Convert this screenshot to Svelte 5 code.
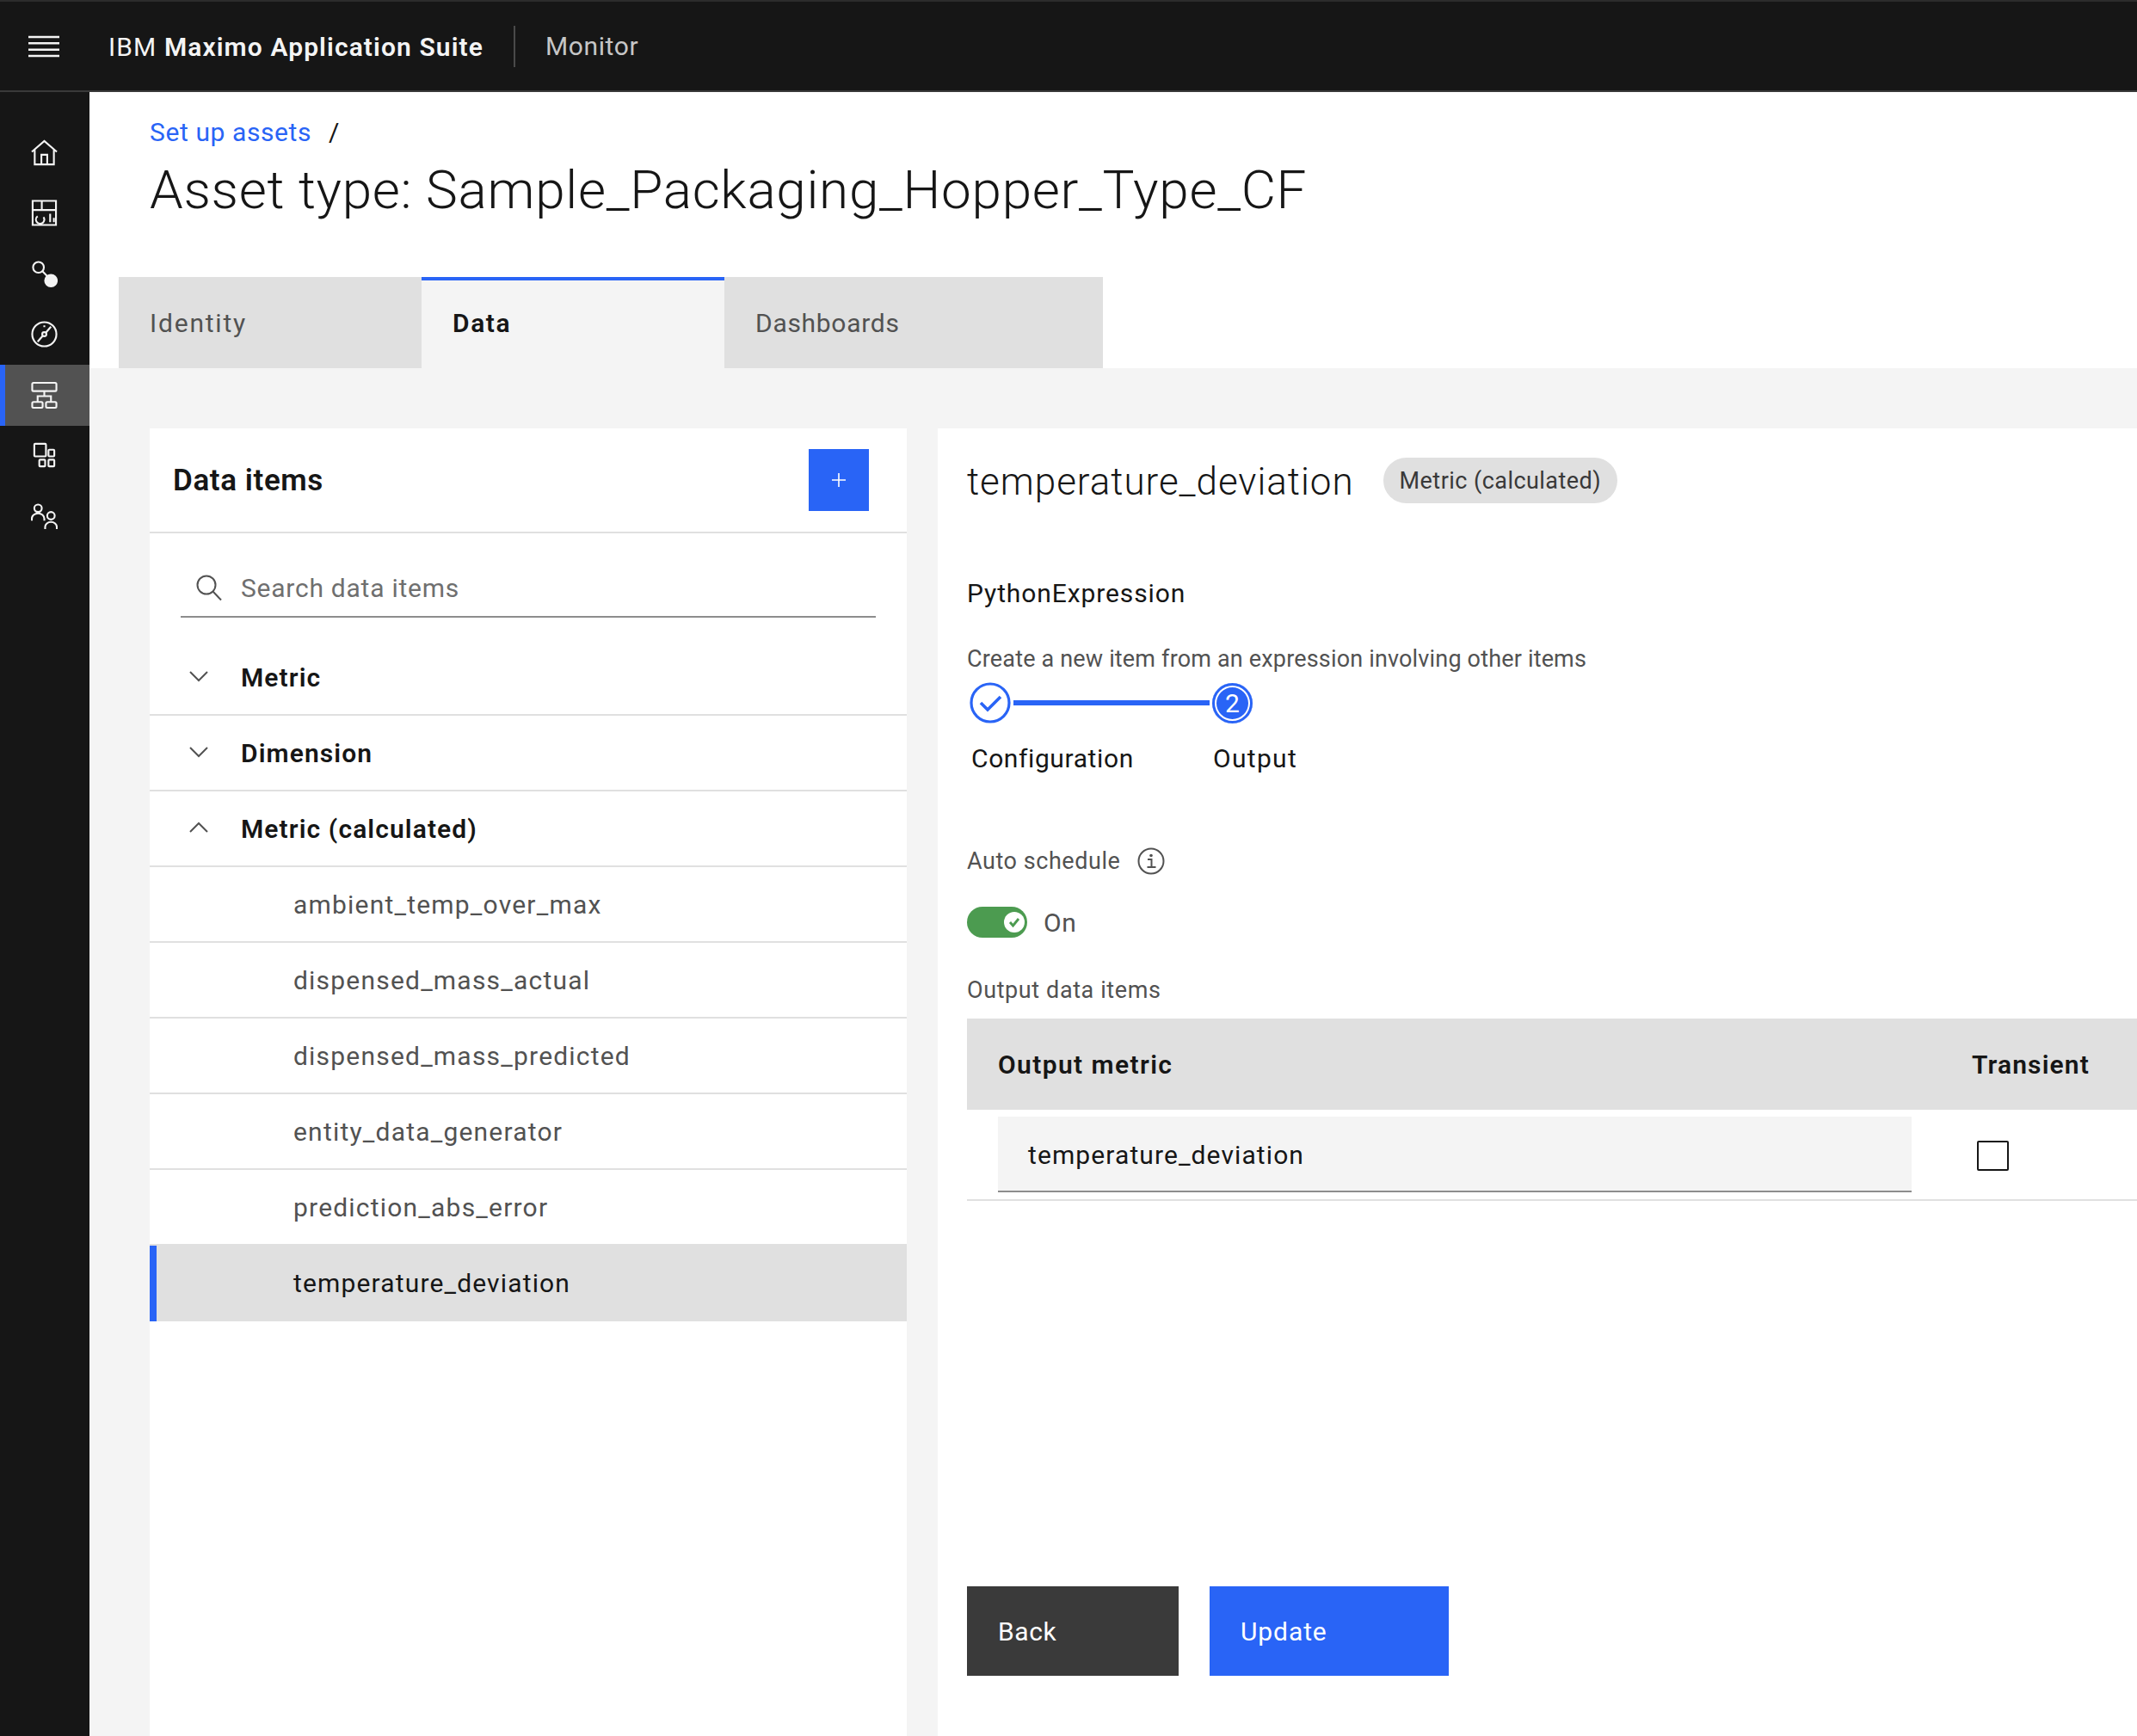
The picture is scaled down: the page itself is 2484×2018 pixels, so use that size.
<script>
  const items = [
    "ambient_temp_over_max",
    "dispensed_mass_actual",
    "dispensed_mass_predicted",
    "entity_data_generator",
    "prediction_abs_error",
    "temperature_deviation"
  ];
  const selected = "temperature_deviation";
</script>

<div class="page">
  <header class="topbar">
    <button class="menu" aria-label="Menu">
      <svg width="36" height="26" viewBox="0 0 36 26"><path d="M0 2h36M0 9.300h36M0 16.700h36M0 24h36" stroke="#f4f4f4" stroke-width="2.400" fill="none" /></svg>
    </button>
    <div class="brand"><span>IBM</span> <strong>Maximo Application Suite</strong></div>
    <div class="app-name">Monitor</div>
  </header>

  <div class="body">
    <nav class="sidenav">
      <div class="nav-item">
        <svg viewBox="0 0 32 32"><path d="M1 15 16 2l15 13M4.500 12.500V30h23V12.500M12.500 30V18.500h7V30" /></svg>
      </div>
      <div class="nav-item">
        <svg viewBox="0 0 32 32"><path d="M2 1.500h28v29H2zM2 12.500h28M13 1.500v11M23 17v10M27.500 22v5" /><path d="M15 21a5 5 0 1 1-7-1" /></svg>
      </div>
      <div class="nav-item">
        <svg viewBox="0 0 32 32"><circle cx="9" cy="8" r="6.500" /><path d="m14 13 6 6" /><circle cx="24" cy="24" r="7" class="solid" /></svg>
      </div>
      <div class="nav-item">
        <svg viewBox="0 0 32 32"><circle cx="16" cy="16" r="14.500" /><circle cx="16" cy="16" r="2.500" /><path d="m18 14 6-7M14 18l-6 7M16 5.500v2" /></svg>
      </div>
      <div class="nav-item active">
        <svg viewBox="0 0 32 32"><rect x="1.500" y="1" width="29" height="10" rx="1.500" /><path d="M16 11v6M8 24v-7h16v7" /><rect x="1.500" y="24" width="12.500" height="7" rx="1.500" /><rect x="18" y="24" width="12.500" height="7" rx="1.500" /></svg>
      </div>
      <div class="nav-item">
        <svg viewBox="0 0 32 32"><rect x="4" y="2" width="14" height="15" rx="1" /><rect x="21" y="9" width="7" height="8" rx="1" /><rect x="10" y="21" width="7" height="8" rx="1" /><rect x="21" y="21" width="7" height="8" rx="1" /></svg>
      </div>
      <div class="nav-item">
        <svg viewBox="0 0 32 32"><circle cx="8.500" cy="6" r="4.500" /><path d="M1 21v-2.500a7 6 0 0 1 15 0V21" /><circle cx="24" cy="15" r="4.500" /><path d="M17 31v-2.500a7 6 0 0 1 14 0V31" /></svg>
      </div>
    </nav>

    <main class="main">
      <section class="head">
        <div class="crumb"><a href="#assets">Set up assets</a><span>/</span></div>
        <h1>Asset type: Sample_Packaging_Hopper_Type_CF</h1>
        <div class="tabs">
          <div class="tab">Identity</div>
          <div class="tab current">Data</div>
          <div class="tab wide">Dashboards</div>
        </div>
      </section>

      <section class="content">
        <aside class="panel list-panel">
          <div class="panel-head">
            <h2>Data items</h2>
            <button class="add" aria-label="Add">
              <svg width="18" height="18" viewBox="0 0 18 18"><path d="M9 1v16M1 9h16" stroke="#fff" stroke-width="1.600" /></svg>
            </button>
          </div>
          <div class="search">
            <svg width="32" height="32" viewBox="0 0 32 32"><circle cx="13" cy="13" r="10.500" /><path d="m20.500 20.500 9.500 10" /></svg>
            <span>Search data items</span>
          </div>
          <div class="group first">
            <svg class="chev" width="24" height="14" viewBox="0 0 24 14"><path d="m2 2 10 10L22 2" /></svg>
            Metric
          </div>
          <div class="group">
            <svg class="chev" width="24" height="14" viewBox="0 0 24 14"><path d="m2 2 10 10L22 2" /></svg>
            Dimension
          </div>
          <div class="group">
            <svg class="chev" width="24" height="14" viewBox="0 0 24 14"><path d="m2 12 10-10 10 10" /></svg>
            Metric (calculated)
          </div>
          {#each items as item}
            <div class="item" class:selected={item === selected}>{item}</div>
          {/each}
        </aside>

        <div class="panel detail">
          <div class="detail-title">
            <h2>temperature_deviation</h2>
            <span class="tag">Metric (calculated)</span>
          </div>
          <div class="fn-name">PythonExpression</div>
          <div class="fn-desc">Create a new item from an expression involving other items</div>

          <div class="steps">
            <svg class="step-icon" width="48" height="48" viewBox="0 0 48 48">
              <circle cx="24" cy="24" r="22" fill="#fff" stroke="#2964f6" stroke-width="3.200" />
              <path d="m13 24 8 8 15-15" fill="none" stroke="#2964f6" stroke-width="3.600" />
            </svg>
            <div class="step-line"></div>
            <div class="step-now">2</div>
          </div>
          <div class="step-labels">
            <span class="cfg">Configuration</span>
            <span>Output</span>
          </div>

          <div class="auto">
            <span>Auto schedule</span>
            <svg width="32" height="32" viewBox="0 0 32 32"><circle cx="16" cy="16" r="14.500" fill="none" stroke="#525252" stroke-width="2" /><path d="M12 14h4.500v9M11.500 23h10" fill="none" stroke="#525252" stroke-width="2" /><circle cx="16" cy="9.500" r="1.800" fill="#525252" /></svg>
          </div>
          <div class="toggle-row">
            <div class="toggle">
              <div class="knob">
                <svg width="14" height="14" viewBox="0 0 14 14"><path d="m2 7 3.500 4L12 3" fill="none" stroke="#4c9b50" stroke-width="2.800" /></svg>
              </div>
            </div>
            <span>On</span>
          </div>

          <div class="table-label">Output data items</div>
          <div class="table-head">
            <span class="metric-col">Output metric</span>
            <span class="transient">Transient</span>
          </div>
          <div class="table-row">
            <div class="input">temperature_deviation</div>
            <div class="checkbox"></div>
          </div>

          <div class="actions">
            <button class="btn back">Back</button>
            <button class="btn primary">Update</button>
          </div>
        </div>
      </section>
    </main>
  </div>
</div>

<style>
  :global(body) {
    margin: 0;
    background: #fff;
    overflow: hidden;
  }

  .page {
    width: 2484px;
    height: 2018px;
    overflow: hidden;
    display: flex;
    flex-direction: column;
    font-family: "Roboto", "Liberation Sans", sans-serif;
    color: #161616;
    font-size: 30px;
    letter-spacing: 0.6px;
  }

  h1,
  h2 {
    margin: 0;
    font-weight: 400;
  }

  button {
    border: 0;
    padding: 0;
    font: inherit;
    letter-spacing: inherit;
  }

  .topbar {
    box-sizing: border-box;
    height: 107px;
    flex-shrink: 0;
    display: flex;
    align-items: center;
    background: #161616;
    border-top: 2px solid #2c2c2c;
    border-bottom: 2px solid #3a3a3a;
    color: #f4f4f4;
  }

  .menu {
    width: 101px;
    display: flex;
    justify-content: center;
    background: none;
  }

  .brand {
    margin-left: 25px;
    padding-right: 35px;
    height: 48px;
    line-height: 50px;
    border-right: 2px solid #4a4a4a;
    letter-spacing: 1.100px;
    white-space: nowrap;
  }

  .brand strong {
    font-weight: 600;
  }

  .app-name {
    margin-left: 35px;
    color: #c6c6c6;
  }

  .body {
    flex: 1;
    display: flex;
    min-height: 0;
  }

  .sidenav {
    width: 104px;
    flex-shrink: 0;
    background: #161616;
    padding-top: 35px;
  }

  .nav-item {
    height: 70.500px;
    display: flex;
    align-items: center;
    justify-content: center;
    box-sizing: border-box;
    padding-right: 2px;
  }

  .nav-item svg {
    width: 31px;
    height: 33px;
    fill: none;
    stroke: #f4f4f4;
    stroke-width: 2.200;
  }

  .nav-item .solid {
    fill: #f4f4f4;
  }

  .nav-item.active {
    background: #525252;
    border-left: 6px solid #2964f6;
    padding-right: 8px;
  }

  .main {
    flex: 1;
    min-width: 0;
    display: flex;
    flex-direction: column;
  }

  .head {
    height: 321px;
    flex-shrink: 0;
    padding-left: 34px;
    box-sizing: border-box;
    display: flex;
    flex-direction: column;
  }

  .crumb {
    margin: 23px 0 0 36px;
    display: flex;
    gap: 20px;
    line-height: 48px;
  }

  .crumb a {
    color: #2964f6;
    text-decoration: none;
  }

  h1 {
    margin: 4px 0 0 36px;
    font-size: 62px;
    line-height: 78px;
    font-weight: 300;
    white-space: nowrap;
    letter-spacing: 0.7px;
  }

  .tabs {
    margin-top: auto;
    display: flex;
  }

  .tab {
    box-sizing: border-box;
    width: 352px;
    height: 106px;
    padding: 0 36px;
    display: flex;
    align-items: center;
    background: #e0e0e0;
    color: #525252;
    letter-spacing: 0.700px;
  }

  .tab:first-child {
    letter-spacing: 1.800px;
  }

  .tab.current {
    background: #f4f4f4;
    border-top: 4px solid #2964f6;
    color: #161616;
    font-weight: 600;
    padding-bottom: 4px;
    letter-spacing: 1.600px;
  }

  .tab.wide {
    width: 440px;
  }

  .content {
    flex: 1;
    min-height: 0;
    display: flex;
    gap: 36px;
    padding: 70px 0 0 70px;
    background: #f4f4f4;
  }

  .panel {
    background: #fff;
    box-sizing: border-box;
  }

  .list-panel {
    width: 880px;
    flex-shrink: 0;
  }

  .panel-head {
    box-sizing: border-box;
    height: 122px;
    display: flex;
    align-items: center;
    justify-content: space-between;
    padding: 0 44px 0 27px;
    border-bottom: 2px solid #e0e0e0;
  }

  .panel-head h2 {
    font-size: 35px;
    font-weight: 600;
    letter-spacing: 0.600px;
  }

  .add {
    width: 70px;
    height: 72px;
    display: flex;
    align-items: center;
    justify-content: center;
    background: #2964f6;
  }

  .search {
    box-sizing: border-box;
    height: 66px;
    margin: 32px 36px 0;
    padding: 0 0 2px 17px;
    display: flex;
    align-items: center;
    gap: 21px;
    border-bottom: 2px solid #8d8d8d;
    color: #6f6f6f;
    letter-spacing: 0.750px;
  }

  .search svg {
    fill: none;
    stroke: #525252;
    stroke-width: 2;
  }

  .group {
    box-sizing: border-box;
    height: 88px;
    display: flex;
    align-items: center;
    border-bottom: 2px solid #e0e0e0;
    font-weight: 600;
    padding-left: 45px;
    letter-spacing: 1.100px;
  }

  .group.first {
    height: 114px;
    padding-top: 26px;
  }

  .chev {
    margin-right: 37px;
    margin-top: -3px;
    flex-shrink: 0;
    fill: none;
    stroke: #525252;
    stroke-width: 2;
  }

  .item {
    box-sizing: border-box;
    height: 88px;
    display: flex;
    align-items: center;
    padding-left: 167px;
    border-bottom: 2px solid #e0e0e0;
    color: #525252;
    letter-spacing: 1.200px;
  }

  .item.selected {
    background: #e0e0e0;
    border-left: 8px solid #2964f6;
    border-bottom: 0;
    padding: 0 0 2px 159px;
    color: #161616;
    letter-spacing: 1.150px;
  }

  .detail {
    flex: 1;
    min-width: 0;
    padding-left: 34px;
    display: flex;
    flex-direction: column;
    overflow: hidden;
  }

  .detail-title {
    display: flex;
    align-items: center;
    margin-top: 34px;
    height: 53px;
  }

  .detail-title h2 {
    font-size: 44px;
    letter-spacing: 0.950px;
    font-weight: 300;
    margin-right: 34px;
    padding-top: 3px;
  }

  .tag {
    height: 53px;
    padding: 0 19px;
    display: flex;
    align-items: center;
    border-radius: 27px;
    background: #e0e0e0;
    color: #393939;
    font-size: 27px;
    letter-spacing: 0.450px;
  }

  .fn-name {
    margin-top: 81px;
    line-height: 48px;
    letter-spacing: 0.900px;
  }

  .fn-desc {
    margin-top: 34px;
    font-size: 27px;
    line-height: 36px;
    color: #525252;
    letter-spacing: 0.170px;
  }

  .steps {
    margin: 9px 0 0 3px;
    display: flex;
    align-items: center;
    height: 48px;
  }

  .step-icon {
    flex-shrink: 0;
  }

  .step-line {
    width: 228px;
    height: 6px;
    background: #2964f6;
    margin: 0 3px;
  }

  .step-now {
    box-sizing: border-box;
    width: 47px;
    height: 47px;
    display: flex;
    align-items: center;
    justify-content: center;
    border-radius: 50%;
    background: #2964f6;
    box-shadow: inset 0 0 0 3px #2964f6, inset 0 0 0 5px #fff;
    color: #fff;
    font-size: 30px;
    letter-spacing: 0;
  }

  .step-labels {
    margin: 21px 0 0 5px;
    display: flex;
    line-height: 40px;
  }

  .step-labels .cfg {
    width: 281px;
  }

  .step-labels span:last-child {
    letter-spacing: 1.300px;
  }

  .auto {
    margin-top: 81px;
    display: flex;
    align-items: center;
    gap: 20px;
    font-size: 27px;
    color: #525252;
    height: 36px;
    letter-spacing: 0.550px;
  }

  .toggle-row {
    margin-top: 35px;
    display: flex;
    align-items: center;
    gap: 19px;
    color: #525252;
    height: 36px;
  }

  .toggle {
    width: 70px;
    height: 36px;
    border-radius: 18px;
    background: #4c9b50;
    display: flex;
    align-items: center;
    justify-content: flex-end;
    padding-right: 3px;
    box-sizing: border-box;
  }

  .knob {
    width: 24px;
    height: 24px;
    border-radius: 50%;
    background: #fff;
    display: flex;
    align-items: center;
    justify-content: center;
  }

  .table-label {
    margin-top: 43px;
    font-size: 27px;
    line-height: 36px;
    color: #525252;
  }

  .table-head {
    box-sizing: border-box;
    margin-top: 15px;
    height: 106px;
    flex-shrink: 0;
    display: flex;
    align-items: center;
    justify-content: space-between;
    padding-left: 36px;
    padding-right: 55px;
    background: #e0e0e0;
    font-weight: 600;
  }

  .metric-col {
    letter-spacing: 1.400px;
  }

  .transient {
    letter-spacing: 1.150px;
  }

  .table-row {
    box-sizing: border-box;
    height: 106px;
    flex-shrink: 0;
    display: flex;
    align-items: flex-start;
    border-bottom: 2px solid #e0e0e0;
    padding: 8px 0 0 36px;
  }

  .input {
    box-sizing: border-box;
    width: 1062px;
    height: 88px;
    padding: 3px 0 0 35px;
    display: flex;
    align-items: center;
    background: #f4f4f4;
    border-bottom: 2px solid #8d8d8d;
    letter-spacing: 1.100px;
  }

  .checkbox {
    box-sizing: border-box;
    width: 37px;
    height: 35px;
    margin: 28px 0 0 76px;
    border: 2px solid #161616;
    border-radius: 2px;
  }

  .actions {
    margin-top: 448px;
    display: flex;
    gap: 36px;
  }

  .btn {
    box-sizing: border-box;
    height: 104px;
    padding: 0 36px;
    text-align: left;
    color: #fff;
  }

  .back {
    width: 246px;
    background: #3a3a3a;
  }

  .primary {
    width: 278px;
    background: #2964f6;
    letter-spacing: 0.900px;
  }
</style>
